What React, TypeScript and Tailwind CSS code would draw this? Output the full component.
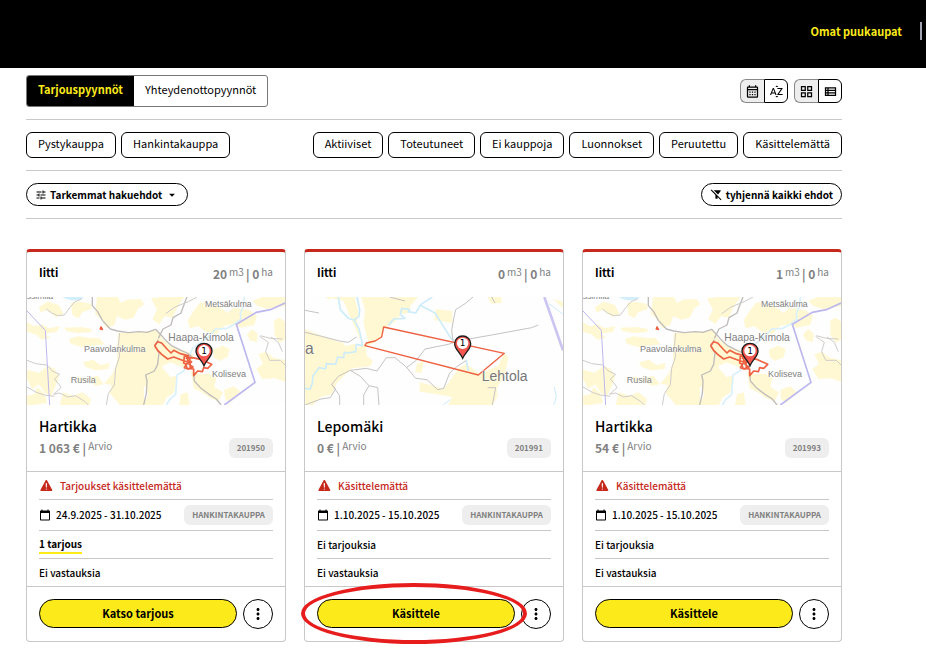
import {
    MdCalendarToday,
    MdFilterAltOff,
    MdMoreVert,
    MdOutlineCalendarMonth,
    MdOutlineGridView,
    MdOutlineViewList,
    MdArrowDropDown,
    MdSortByAlpha,
    MdTune,
} from "react-icons/md"
import { IoWarning } from "react-icons/io5"

type Deal = {
    id: string
    municipality: string
    volume: string
    area: string
    name: string
    price: string
    status: string
    period: string
    type: string
    offers: string
    hasOffers?: boolean
    replies: string
    action: string
    highlighted?: boolean
    map: "village" | "parcel"
    pinX: number
}

const deals: Deal[] = [
    {
        id: "201950",
        municipality: "Iitti",
        volume: "20",
        area: "0",
        name: "Hartikka",
        price: "1 063 €",
        status: "Tarjoukset käsittelemättä",
        period: "24.9.2025 - 31.10.2025",
        type: "HANKINTAKAUPPA",
        offers: "1 tarjous",
        hasOffers: true,
        replies: "Ei vastauksia",
        action: "Katso tarjous",
        map: "village",
        pinX: 531,
    },
    {
        id: "201991",
        municipality: "Iitti",
        volume: "0",
        area: "0",
        name: "Lepomäki",
        price: "0 €",
        status: "Käsittelemättä",
        period: "1.10.2025 - 15.10.2025",
        type: "HANKINTAKAUPPA",
        offers: "Ei tarjouksia",
        replies: "Ei vastauksia",
        action: "Käsittele",
        highlighted: true,
        map: "parcel",
        pinX: 473,
    },
    {
        id: "201993",
        municipality: "Iitti",
        volume: "1",
        area: "0",
        name: "Hartikka",
        price: "54 €",
        status: "Käsittelemättä",
        period: "1.10.2025 - 15.10.2025",
        type: "HANKINTAKAUPPA",
        offers: "Ei tarjouksia",
        replies: "Ei vastauksia",
        action: "Käsittele",
        map: "village",
        pinX: 501,
    },
]

const saleTypes = ["Pystykauppa", "Hankintakauppa"]
const statuses = ["Aktiiviset", "Toteutuneet", "Ei kauppoja", "Luonnokset", "Peruutettu", "Käsittelemättä"]

function Pin({ x, y }: { x: number; y: number }) {
    return (
        <g transform={`translate(${x} ${y})`}>
            <path d="M0 0C-8 -19 -24 -27 -24 -44a24 23 0 0 1 48 0C24 -27 8 -19 0 0Z" fill="#f4574f" stroke="#1c1c1c" strokeWidth="4" />
            <circle cx="0" cy="-45" r="17" fill="#fff" />
            <text x="0" y="-36" textAnchor="middle" fontSize="27" fill="#000" className="font-['DejaVu_Sans',sans-serif]">1</text>
        </g>
    )
}

function VillageMap({ pinX }: { pinX: number }) {
    return (
        <svg viewBox="0 0 774 324" preserveAspectRatio="xMidYMid slice" className="block h-27 w-full bg-[#fefefe] font-['Liberation_Sans',sans-serif]" role="img" aria-label="Kartta">
            {/* fields */}
            <g fill="#fff8d2">
                <path d="M36 30L62 14L96 24L110 52L88 60L60 40L40 46Z" />
                <path d="M132 18L158 14L192 20L194 36L166 46L154 64L136 54Z" />
                <path d="M0 76L22 88L46 82L64 94L98 88L90 104L54 110L70 122L44 128L26 112L0 104Z" />
                <path d="M112 92L162 90L196 96L190 106L150 108L118 102Z" />
                <path d="M126 126L152 118L186 122L218 124L232 142L196 146L164 150L132 140Z" />
                <path d="M210 0H272L282 18L300 8L340 6L352 22L334 34L320 62L296 68L270 58L262 84L238 94L222 66L204 52Z" />
                <path d="M272 108L330 106L392 100L406 126L438 150L470 160L500 172L490 206L466 210L430 196L408 206L398 232L372 222L366 262L350 270L352 324H278L262 304L248 288L254 264L232 260L258 228L270 196Z" />
                <path d="M372 4L406 0H472L454 26L436 62L414 58L396 82L376 66L390 38Z" />
                <path d="M0 218L36 228L60 208L82 214L96 240L86 268L72 298L54 288L36 262L16 276L0 246Z" />
                <path d="M30 270L52 288L60 318L20 324H0V296L22 292Z" />
                <path d="M108 286L138 296L166 286L192 306L188 324H98Z" />
                <path d="M168 196L198 188L220 204L248 198L244 216L206 220L176 210Z" />
                <path d="M148 238L176 244L212 236L230 262L206 266L182 250L152 254Z" />
                <path d="M360 218L408 214L430 240L450 236L442 286L418 302L408 324H348L364 294L352 258Z" />
                <path d="M504 36L520 16L566 22L602 48L620 32L668 40L690 56L682 84L640 92L622 82L592 86L568 112L536 104L514 88L488 94L482 70Z" />
                <path d="M676 12L704 0H774V28L720 36L690 26Z" />
                <path d="M742 70L758 62L774 74V128L758 138L742 112Z" />
                <path d="M660 112L676 96L692 110L690 136L668 130Z" />
                <path d="M694 172L716 164L740 182L774 190V254L744 244L706 246L688 216L708 200Z" />
                <path d="M492 222L518 232L546 230L568 242L562 270L588 286L574 314L548 302L522 284L500 274Z" />
                <path d="M558 158L586 146L608 156L602 180L576 192L560 180Z" />
                <path d="M592 278L622 268L640 284L610 318L594 306Z" />
                <path d="M462 292L482 286L488 324H456Z" />
            </g>
            <path d="M106 0Q124 11 148 10Q166 8 170 0Z" fill="#d3effb" />
            {/* streams */}
            <g fill="none" stroke="#d9f1fb" strokeWidth="5" strokeLinejoin="round">
                <path d="M652 0L650 28L640 48L642 66L622 82L600 94L566 96L546 118L520 138L498 152L488 174L482 202L470 222L450 234L448 262L446 292L428 308L418 324" />
            </g>
            {/* roads */}
            <g fill="none" stroke="#bfbcba" strokeWidth="4" strokeLinejoin="round">
                <path d="M196 0V26L212 44L226 70L250 96L272 102L304 107L336 104L360 106L386 97L404 116L416 130L434 146L462 160L480 168L494 178" />
                <path d="M394 128L384 148L396 168L392 202L382 222L356 234L360 252L358 290L350 324" />
                <path d="M500 226L502 252L522 274L546 292L568 306L582 324" />
                <path d="M394 124L408 96L432 84L438 62L462 48L472 20L480 0" />
            </g>
            <g fill="none" stroke="#cfccca" strokeWidth="3" strokeLinejoin="round">
                <path d="M58 36L74 48L92 56L112 54L128 32L144 14L164 6" />
                <path d="M278 108L274 146L278 178L266 214L262 264L244 290L238 324" />
                <path d="M0 190L26 200L60 204L76 222L98 232L82 246L96 262L102 272L80 292L98 288L122 300L146 296L174 314L184 324" />
                <path d="M0 270L28 286L52 294L82 298" />
                <path d="M700 116L730 124L766 126M732 120L754 136L766 164M698 118L724 136L716 164L728 190L760 190L774 204" />
                <path d="M416 50L444 30L484 14L510 0" />
            </g>
            {/* municipal border */}
            <g fill="none" stroke="#bcb7ee" strokeWidth="5">
                <path d="M0 42L55 100L68 324" strokeWidth="3" />
                <path d="M774 18L730 38L688 46L628 82L684 256L592 324" />
            </g>
            {/* stand borders */}
            <g fill="none" stroke="#ee6142" strokeWidth="5" strokeLinejoin="round">
                <path d="M384 144L392 134L404 138L420 156L432 168L440 160L460 170L482 176L478 184L496 182L524 188L554 202L542 214L530 212L526 224L512 222L500 236L500 216L480 214L476 202L488 196L472 192L440 180L422 186L404 172L392 160L384 148Z" />
                <path d="M472 178L484 176L482 190L494 194L486 202L498 210L484 216L472 212L478 202L470 198ZM488 178L490 216" />
                <path d="M222 90L220 96L226 97Z" fill="#ee6142" />
            </g>
            <g fill="#808080" stroke="#fff" strokeWidth="2" paintOrder="stroke">
                <text x="-1" y="7" fontSize="26">ssimila</text>
                <text x="534" y="29" fontSize="26">Metsäkulma</text>
                <text x="424" y="132" fontSize="31">Haapa-Kimola</text>
                <text x="171" y="164" fontSize="27">Paavolankulma</text>
                <text x="131" y="257" fontSize="27">Rusila</text>
                <text x="555" y="239" fontSize="27">Koliseva</text>
            </g>
            <Pin x={pinX} y={206} />
        </svg>
    )
}

function ParcelMap({ pinX }: { pinX: number }) {
    return (
        <svg viewBox="0 0 774 324" preserveAspectRatio="xMidYMid slice" className="block h-27 w-full bg-[#fefefe] font-['Liberation_Sans',sans-serif]" role="img" aria-label="Kartta">
            {/* fields */}
            <g fill="#fff8d2">
                <path d="M0 0H340L318 24L310 48L288 52L268 76L236 96L226 126L182 150L186 178L204 192L196 208L140 214L96 258L80 292L48 300L24 324H0V200L68 160L150 140V90L136 60L100 30L76 10L60 0Z" />
                <path d="M0 96L60 120L120 140L90 210L30 250L0 240Z" />
                <path d="M392 36L442 42V78L388 70Z" />
                <path d="M546 0H588L590 18L560 20Z" />
                <path d="M744 6L774 14V34Z" />
                <path d="M336 200L356 192L350 228L330 226Z" />
                <path d="M344 256L378 264L416 276L442 242L462 212L484 200L524 230L580 206L598 168L610 182L600 230L576 274L578 300L562 324H430L442 300L396 292L344 284Z" />
            </g>
            <path d="M158 0L170 40L166 80L178 130L160 140L138 90L108 20L74 12" fill="none" stroke="#fefefe" strokeWidth="20" />
            {/* streams */}
            <g fill="none" stroke="#cdecf9" strokeWidth="5" strokeLinejoin="round">
                <path d="M156 0L164 38L162 58L148 68M100 0L106 38L130 64L148 70L162 96L170 130L172 146L154 142L152 164L128 168L118 166L116 182L98 180L92 202L64 200L62 216L42 212L24 236L22 258L16 276L0 274" />
                <path d="M382 0L348 22L332 48L310 44L314 38L290 34L286 52L300 64L266 66L250 86" />
                <path d="M344 24L390 48L410 80L438 124L448 132" />
                <path d="M484 190L490 222" />
                <path d="M732 20L774 52M748 270L754 300L746 324" strokeWidth="3" />
                <path d="M414 324L436 308" strokeWidth="3" />
            </g>
            {/* roads */}
            <g fill="none" stroke="#c6c3c2" strokeWidth="3" strokeLinejoin="round">
                <path d="M0 40L42 48M0 106L50 118L104 132L130 136L154 120M0 324L48 306L76 302L92 276L80 262L100 238L136 220L184 214L216 222L244 182L270 182L304 210L332 244L366 248L398 278L416 274L434 228L454 210L484 190" />
                <path d="M304 212L334 190L360 156L430 142L458 132L560 114L680 92L700 84" />
                <path d="M504 0L480 20L452 38L446 66L440 100L444 132M136 220L166 238L192 266L218 272L222 324M192 266L176 294V324M80 262L104 296V324" />
                <path d="M254 0L300 12M548 272H572L562 324M560 0L570 18" />
            </g>
            <path d="M718 0L774 160" fill="none" stroke="#cbc5f1" strokeWidth="8" />
            {/* stand border */}
            <path d="M236 90L598 169L520 234L180 146L184 138L210 132L230 120Z" fill="none" stroke="#ee6142" strokeWidth="4" strokeLinejoin="round" />
            <g fill="#777" stroke="#fff" strokeWidth="2" paintOrder="stroke">
                <text x="0" y="170" fontSize="47">a</text>
                <text x="530" y="251" fontSize="42">Lehtola</text>
            </g>
            <Pin x={pinX} y={184} />
        </svg>
    )
}

function Chip({ label }: { label: string }) {
    return (
        <button type="button" className="h-[26px] rounded-md border border-black px-[11px] pb-1 text-[11px] leading-5">
            {label}
        </button>
    )
}

function Tag({ label }: { label: string }) {
    return <span className="rounded-md bg-[#eee] px-2 text-[8px] leading-5 font-bold text-[#808080]">{label}</span>
}

function DealCard({ deal }: { deal: Deal }) {
    return (
        <article className="rounded-sm border border-t-3 border-[#c8c8c8] border-t-[#c6281c]">
            <header className="flex h-[45px] items-start justify-between px-3 pt-[10px]">
                <h3 className="text-[11px] leading-5 font-bold">{deal.municipality}</h3>
                <p className="flex items-start gap-[2px] pt-[2px] text-[12px] leading-5 font-bold text-[#808080]">
                    <span>{deal.volume}</span>
                    <span className="text-[10px] leading-4 font-normal">m3</span>
                    <span>| {deal.area}</span>
                    <span className="text-[10px] leading-4 font-normal">ha</span>
                </p>
            </header>

            {deal.map === "village" ? <VillageMap pinX={deal.pinX} /> : <ParcelMap pinX={deal.pinX} />}

            <div className="flex h-[67px] items-end justify-between border-b border-[#c8c8c8] px-3 pb-[13px]">
                <div>
                    <h2 className="text-[14px] leading-6 font-medium">{deal.name}</h2>
                    <p className="flex items-start gap-[2px] text-[12px] leading-5 font-bold text-[#808080]">
                        <span>{deal.price} |</span>
                        <span className="text-[10px] leading-4 font-normal">Arvio</span>
                    </p>
                </div>
                <Tag label={deal.id} />
            </div>

            <ul className="divide-y divide-[#c8c8c8] px-3 text-[10px] leading-5 font-medium">
                <li className="flex h-7 items-center gap-[6px] text-[#c6281c]">
                    <IoWarning className="size-[15px]" />
                    {deal.status}
                </li>
                <li className="flex h-[31px] items-center justify-between">
                    <span className="flex items-center gap-[5px]">
                        <MdCalendarToday className="size-3" />
                        {deal.period}
                    </span>
                    <Tag label={deal.type} />
                </li>
                <li className="flex h-7 items-center">
                    {deal.hasOffers ? (
                        <a href="#tarjoukset" className="border-b-2 border-[#fcea1b] leading-4 font-bold">{deal.offers}</a>
                    ) : (
                        deal.offers
                    )}
                </li>
                <li className="flex h-[27px] items-center">{deal.replies}</li>
            </ul>

            <footer className="flex items-start gap-[6px] border-t border-[#c8c8c8] p-3">
                <div className="relative flex-1">
                    <button type="button" className="block h-[29px] w-full rounded-full border border-black bg-[#fcea1b] pb-[2px] text-[11px] leading-6 font-bold">
                        {deal.action}
                    </button>
                    {deal.highlighted && (
                        <div className="pointer-events-none absolute -top-4 -right-3 -bottom-4 -left-4 z-10 rounded-[50%] border-4 border-[#e71d1d]" />
                    )}
                </div>
                <button type="button" aria-label="Lisää toimintoja" className="flex size-[30px] items-center justify-center rounded-full border border-black">
                    <MdMoreVert className="size-[18px]" />
                </button>
            </footer>
        </article>
    )
}

export default function App() {
    return (
        <div className="min-h-screen bg-white font-['Noto_Sans_CJK_SC',sans-serif] text-black">
            <header className="flex h-17 items-center justify-end gap-[18px] bg-black pr-1 pb-[6px]">
                <a href="#puukaupat" className="text-[11px] leading-5 font-bold text-[#fcea1b]">Omat puukaupat</a>
                <span className="h-[18px] w-[2px] bg-[#a0a3b0]" />
            </header>

            <main className="mr-[84px] ml-[26px] pt-[7px]">
                <div className="flex items-center justify-between border-b border-[#c8c8c8] pb-3">
                    <div className="flex h-8 overflow-hidden rounded-[3px] border border-[#777] text-[11px] leading-5">
                        <button type="button" className="bg-black px-[11px] pb-1 font-bold text-[#fcea1b]">Tarjouspyynnöt</button>
                        <button type="button" className="px-[11px] pb-1">Yhteydenottopyynnöt</button>
                    </div>
                    <div className="flex gap-[6px]">
                        <div className="flex h-6">
                            <button type="button" aria-label="Järjestä päivän mukaan" className="flex w-6 items-center justify-center rounded-l-md border border-r-0 border-[#888] bg-[#eee]">
                                <MdOutlineCalendarMonth className="size-[15px]" />
                            </button>
                            <button type="button" aria-label="Järjestä aakkosittain" className="flex w-6 items-center justify-center rounded-r-md border border-black">
                                <MdSortByAlpha className="size-[15px]" />
                            </button>
                        </div>
                        <div className="flex h-6">
                            <button type="button" aria-label="Kortit" className="flex w-6 items-center justify-center rounded-l-md border border-r-0 border-[#888] bg-[#eee]">
                                <MdOutlineGridView className="size-[15px]" />
                            </button>
                            <button type="button" aria-label="Lista" className="flex w-6 items-center justify-center rounded-r-md border border-black">
                                <MdOutlineViewList className="size-[15px]" />
                            </button>
                        </div>
                    </div>
                </div>

                <div className="flex flex-wrap justify-between gap-[5px] border-b border-[#c8c8c8] py-3">
                    <div className="flex gap-[5px]">
                        {saleTypes.map((label) => (
                            <Chip key={label} label={label} />
                        ))}
                    </div>
                    <div className="flex gap-[5px]">
                        {statuses.map((label) => (
                            <Chip key={label} label={label} />
                        ))}
                    </div>
                </div>

                <div className="flex justify-between border-b border-[#c8c8c8] py-3 text-[10px] leading-5 font-bold">
                    <button type="button" className="flex h-[23px] items-center gap-[3px] rounded-full border border-black px-2">
                        <MdTune className="size-3" />
                        Tarkemmat hakuehdot
                        <MdArrowDropDown className="size-[14px]" />
                    </button>
                    <button type="button" className="flex h-[23px] items-center gap-[3px] rounded-full border border-black px-2">
                        <MdFilterAltOff className="size-[13px]" />
                        tyhjennä kaikki ehdot
                    </button>
                </div>

                <section className="grid grid-cols-3 gap-[18px] pt-[30px]">
                    {deals.map((deal) => (
                        <DealCard key={deal.id} deal={deal} />
                    ))}
                </section>
            </main>
        </div>
    )
}
